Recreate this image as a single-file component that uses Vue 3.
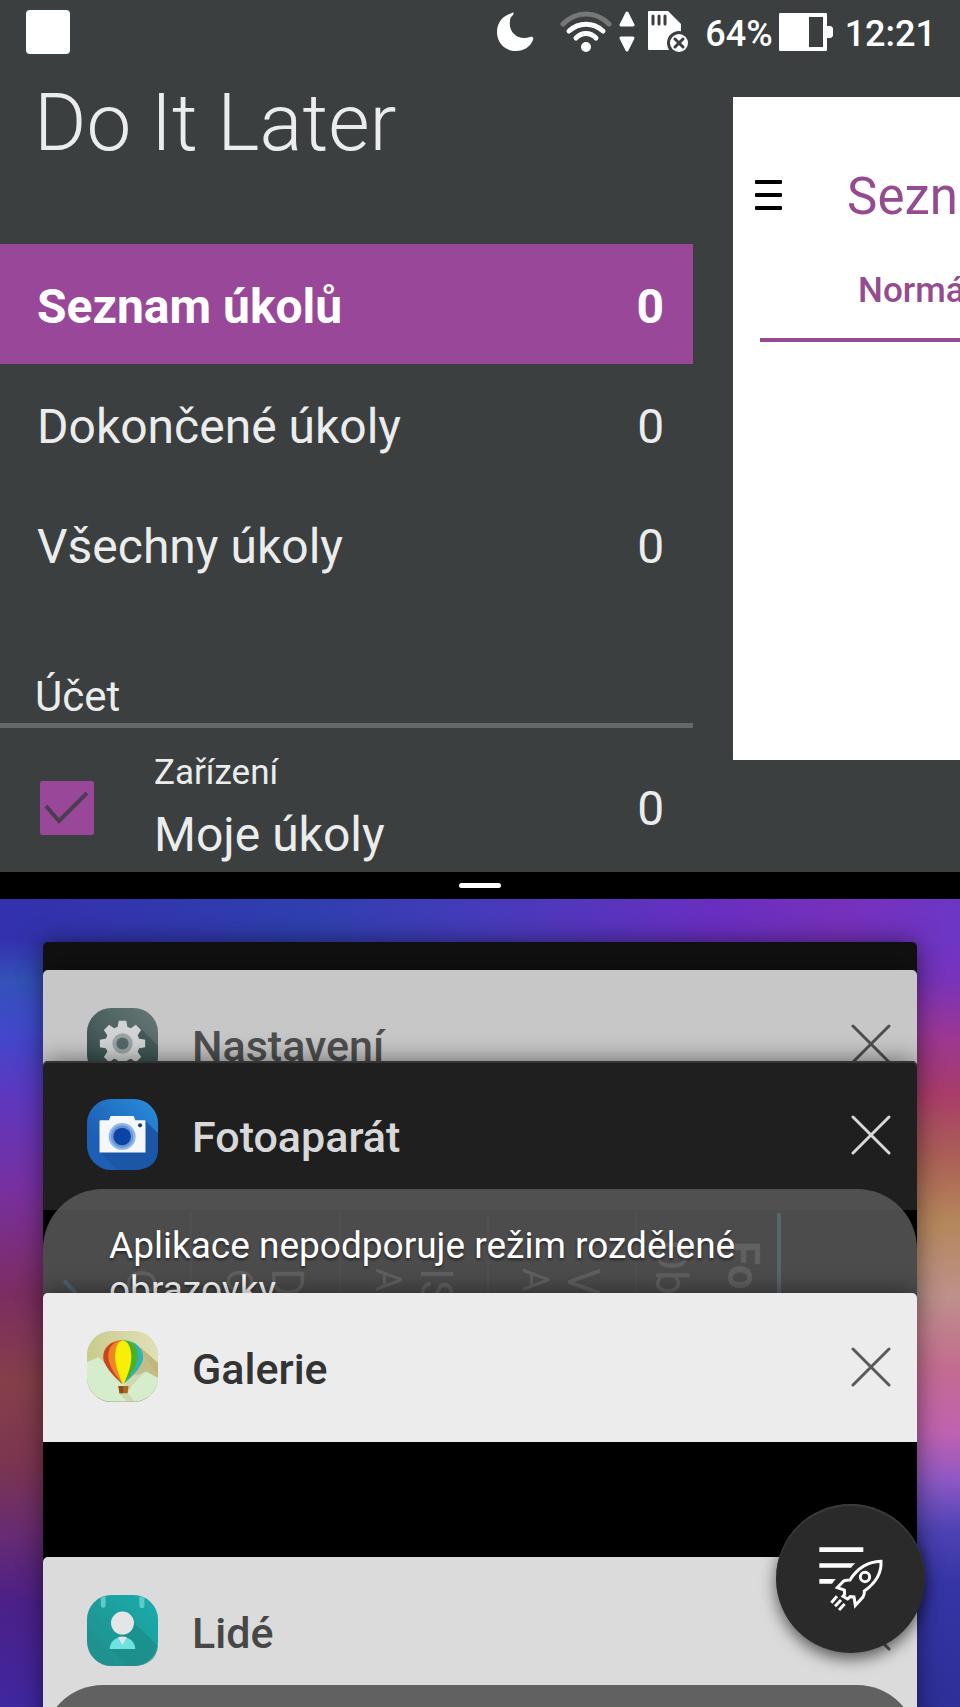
<template>
  <div class="screen">
    <section class="app-pane">
      <header class="status-bar">
        <span class="notice"></span>
        <div class="status-icons">
          <svg class="moon" width="38" height="40" viewBox="0 0 38 40">
            <path
              d="M15 1C4 4 0 12 0 20c0 11 8 19 19 19 8 0 14-4 17-11 1-3-1-4-3-3-11 4-22-4-20-16 0-3 1-4 3-6 1-2 1-3-1-2z"
              fill="#fff"
            />
          </svg>
          <svg class="wifi" width="52" height="44" viewBox="0 0 52 44" fill="none" stroke="#fff" stroke-linecap="round">
            <path d="M3 14C16 .500 36 .500 49 14" stroke="#747978" stroke-width="5" />
            <path d="M9 21c10-9 24-9 34 0" stroke-width="5" />
            <path d="M16 28c6-6 14-6 20 0" stroke-width="5" />
            <circle cx="26" cy="37" r="5" fill="#fff" stroke="none" />
          </svg>
          <svg class="traffic" width="18" height="42" viewBox="0 0 18 42" fill="#fff" stroke="#fff" stroke-width="3" stroke-linejoin="round">
            <path d="M9 2l6 12H3zM9 39L3 27h12z" />
          </svg>
          <svg class="sd-card" width="42" height="42" viewBox="0 0 42 42">
            <path d="M2 0h19l13 13v26H2a1 1 0 0 1-1-1V1a1 1 0 0 1 1-1z" fill="#fff" />
            <path d="M6 5v8M12 5v8M18 5v8" stroke="#3b3f40" stroke-width="3" stroke-linecap="round" />
            <circle cx="32" cy="32" r="12" fill="#3b3f40" />
            <circle cx="32" cy="32" r="9" fill="#fff" />
            <path d="M28 28l8 8M36 28l-8 8" stroke="#3b3f40" stroke-width="3" stroke-linecap="round" />
          </svg>
          <span class="percent">64%</span>
          <svg class="battery" width="54" height="38" viewBox="0 0 54 38">
            <path d="M1 0h46a1 1 0 0 1 1 1v12h4l2 2v8l-2 2h-4v12a1 1 0 0 1-1 1H1a1 1 0 0 1-1-1V1a1 1 0 0 1 1-1z" fill="#fff" />
            <path d="M30 4h14v30H30z" fill="#3b3f40" />
          </svg>
          <time>12:21</time>
        </div>
      </header>

      <div class="app-body">
        <aside class="drawer">
          <h1>Do It Later</h1>
          <nav>
            <a v-for="item in lists" :key="item.name" href="#" :class="{ active: item.active }">
              <span>{{ item.name }}</span>
              <span>{{ item.count }}</span>
            </a>
          </nav>
          <h2>Účet</h2>
          <div class="account">
            <span class="check">
              <input id="account-device" v-model="accountOn" type="checkbox" />
              <svg v-if="accountOn" width="54" height="54" viewBox="0 0 54 54">
                <path d="M6 25l13 15 28-28" fill="none" stroke="#4b3c50" stroke-width="4" />
              </svg>
            </span>
            <label for="account-device">
              <small>Zařízení</small>
              <span>Moje úkoly</span>
            </label>
            <span>0</span>
          </div>
        </aside>

        <main class="content">
          <div class="toolbar">
            <button type="button" class="menu" aria-label="Menu"><i></i><i></i><i></i></button>
            <span>Sezn</span>
          </div>
          <div class="tab">Normá</div>
        </main>
      </div>
    </section>

    <div class="divider"><span></span></div>

    <section class="recents">
      <article v-for="app in apps" :key="app.id" class="card" :class="app.id">
        <header v-if="app.title">
          <!-- settings -->
          <svg v-if="app.id === 'settings'" class="app-icon" viewBox="0 0 210 210">
            <defs>
              <linearGradient id="g-settings" x1="0" y1="1" x2="1" y2="0">
                <stop offset="0" stop-color="#2f4848" />
                <stop offset="1" stop-color="#687977" />
              </linearGradient>
            </defs>
            <rect width="210" height="210" rx="72" fill="url(#g-settings)" />
            <path d="M150 52l60 60v60l-60 38H100L60 160z" fill="#35504f" opacity="0.6" />
            <circle cx="105" cy="105" r="51" fill="#d2d4d4" />
            <path
              v-for="n in 8"
              :key="n"
              d="M94 38h22l4 20H90z"
              fill="#d2d4d4"
              :transform="`rotate(${n * 45} 105 105)`"
            />
            <circle cx="105" cy="105" r="30" fill="#9aa5a5" />
            <circle cx="105" cy="105" r="18" fill="#566968" />
          </svg>
          <!-- camera -->
          <svg v-else-if="app.id === 'camera'" class="app-icon" viewBox="0 0 210 210">
            <defs>
              <linearGradient id="g-camera" x1="0" y1="1" x2="1" y2="0">
                <stop offset="0.3" stop-color="#1d5fb4" />
                <stop offset="1" stop-color="#2a8edd" />
              </linearGradient>
            </defs>
            <rect width="210" height="210" rx="72" fill="url(#g-camera)" />
            <path d="M173 64l37 37v50c0 40-30 59-72 59H90l-50-52z" fill="#1b57a6" />
            <path d="M37 66q0-3 3-3h25l5-13h68l5 13h27q3 0 3 3v92H37z" fill="#f5f7fa" />
            <circle cx="104" cy="111" r="40" fill="#8db8ef" />
            <circle cx="104" cy="111" r="33" fill="#6a94d4" />
            <circle cx="104" cy="111" r="26" fill="#0c44a4" />
            <circle cx="157" cy="78" r="6" fill="#1c3f7c" />
          </svg>
          <!-- gallery -->
          <svg v-else-if="app.id === 'gallery'" class="app-icon" viewBox="0 0 210 210">
            <defs>
              <clipPath id="c-gallery"><rect width="210" height="208" rx="72" /></clipPath>
              <linearGradient id="g-gallery" x1="0" y1="0" x2="1" y2="0">
                <stop offset="0" stop-color="#c9cb8c" />
                <stop offset="1" stop-color="#e2dfba" />
              </linearGradient>
            </defs>
            <rect y="2" width="210" height="208" rx="72" fill="#a9af98" />
            <g clip-path="url(#c-gallery)">
              <path d="M0 0h210v210H0z" fill="url(#g-gallery)" />
              <path d="M160 50l50 44v44l-80-10z" fill="#c2b67c" />
              <path d="M0 92l35-14 60 62 55-10 25-10 35 18v72H0z" fill="#d6edcd" />
              <path d="M166 70l44 60v10l-36-22-40 42-14 24 24 26h-24L95 184z" fill="#c8c493" opacity="0.5" />
            </g>
            <path d="M106 28C70 26 46 50 48 80c2 22 28 52 56 77z" fill="#c8461d" />
            <path d="M106 28C80 28 62 46 63 78c2 24 20 54 43 79z" fill="#f08426" />
            <path d="M106 28c36-2 61 22 60 52-2 22-28 52-58 77z" fill="#2fb2b4" />
            <path d="M106 28c28 0 45 18 44 50-2 24-20 54-44 79z" fill="#4cb026" />
            <path d="M106 28C90 30 83 52 83 78c1 28 12 56 24 82 12-26 24-54 24-82 0-26-8-48-25-50z" fill="#f8ee08" />
            <path d="M93 163h30l-3 21H96z" fill="#b0651f" />
            <path d="M93 163h14v21H96z" fill="#8d4c17" />
          </svg>
          <!-- contacts -->
          <svg v-else class="app-icon" viewBox="0 0 210 210">
            <defs>
              <linearGradient id="g-people" x1="0" y1="1" x2="1" y2="0">
                <stop offset="0.2" stop-color="#1f9290" />
                <stop offset="1" stop-color="#18aeae" />
              </linearGradient>
            </defs>
            <rect width="210" height="210" rx="72" fill="url(#g-people)" />
            <path d="M139 83l71 68c-4 38-30 59-72 59h-20l-50-50z" fill="#1b8b88" opacity="0.7" />
            <path d="M41 8l14-4v27a7 7 0 0 1-14 0zM155 4l15 4v23a7 7 0 0 1-15 0z" fill="#5fcbc8" />
            <circle cx="105" cy="83" r="34" fill="#e4e6e6" />
            <path d="M67 160c2-48 74-48 76 0z" fill="#6fe1de" />
            <path d="M92 125q13-5 26 0l-13 22z" fill="#e4e6e6" />
          </svg>

          <h3>{{ app.title }}</h3>
          <button type="button" class="close" :aria-label="`Zavřít ${app.title}`">
            <svg width="40" height="40" viewBox="0 0 40 40">
              <path d="M2 2l36 36M38 2L2 38" fill="none" stroke="currentColor" stroke-width="3" stroke-linecap="round" />
            </svg>
          </button>
        </header>

        <div v-if="app.note !== undefined" class="toast">
          <!-- sideways camera mode list showing through the message -->
          <svg v-if="app.id === 'camera'" class="modes" viewBox="0 0 874 110" aria-hidden="true">
            <path d="M148 24v86M297 24v86M445 24v86M593 24v86" stroke="#505050" stroke-width="2" />
            <path d="M736 24v86" stroke="#55666c" stroke-width="4" />
            <path d="M21 92l12 12" stroke="#4d6372" stroke-width="4" />
            <g font-size="44">
              <text transform="translate(84 80) rotate(90)" font-size="40">C</text>
              <text transform="translate(184 80) rotate(90)" font-size="36">C</text>
              <text transform="translate(229 79) rotate(90)">D</text>
              <text transform="translate(333 79) rotate(90)" font-size="36">A</text>
              <text transform="translate(378 79) rotate(90)">IS</text>
              <text transform="translate(480 79) rotate(90)" font-size="36">A</text>
              <text transform="translate(525 79) rotate(90)">V</text>
              <text transform="translate(613 51) rotate(90)">Ob</text>
              <text transform="translate(685 52) rotate(90)" font-weight="700">Fo</text>
            </g>
          </svg>
          <p v-if="app.note">{{ app.note }}</p>
        </div>
      </article>

      <button type="button" class="boost" aria-label="Vyčistit">
        <svg width="66" height="66" viewBox="353 317 198 198" fill="none" stroke="#fff">
          <path d="M357 321h132v14H357zM357 369h108q-8 6-13 13h-95zM357 416h49l-11 14h-38z" fill="#fff" stroke="none" />
          <path
            d="M542 363C500 364 470 386 449 419q-12 0-19 3l-19 20 21 7 1 13-5 6 14 8 8-7 11 1 4 25 23-25q5-8 4-18C526 428 544 400 542 363z"
            stroke-width="9"
          />
          <circle cx="494" cy="410" r="14" stroke-width="9" />
          <path d="M393 487l17-19M404 498l18-19M416 509l17-18" stroke-width="9" />
        </svg>
      </button>
    </section>
  </div>
</template>

<script setup>
import { ref } from 'vue';

const accountOn = ref(true);

const lists = [
  { name: 'Seznam úkolů', count: 0, active: true },
  { name: 'Dokončené úkoly', count: 0 },
  { name: 'Všechny úkoly', count: 0 },
];

const apps = [
  { id: 'blank' },
  { id: 'settings', title: 'Nastavení' },
  { id: 'camera', title: 'Fotoaparát', note: 'Aplikace nepodporuje režim rozdělené obrazovky' },
  { id: 'gallery', title: 'Galerie' },
  { id: 'people', title: 'Lidé', note: '' },
];
</script>

<style>
body {
  margin: 0;
  background: #000;
}
</style>

<style scoped>
.screen {
  display: flex;
  flex-direction: column;
  height: 100vh;
  overflow: hidden;
  font-family: Roboto, 'Noto Sans', sans-serif;
}

h1,
h2,
h3,
p {
  margin: 0;
  font-weight: 400;
}

button {
  padding: 0;
  border: 0;
  background: none;
}

svg {
  display: block;
  flex: none;
}

/* upper app */
.app-pane {
  flex: none;
  background: #3b3f40;
  color: #ebeded;
}

.status-bar {
  display: flex;
  align-items: center;
  justify-content: space-between;
  height: 64px;
  padding: 0 24px 0 26px;
  color: #fff;
  font-size: 36px;
  font-weight: 500;
}

.notice {
  width: 44px;
  height: 44px;
  border-radius: 4px;
  background: #fff;
}

.status-icons {
  display: flex;
  align-items: center;
}

.status-icons span,
.status-icons time {
  padding-top: 3px;
}

.wifi {
  margin-left: 25px;
}

.traffic {
  margin-left: 6px;
}

.sd-card {
  margin-left: 11px;
}

.percent {
  margin-left: 16px;
}

.battery {
  margin: 0 12px 0 6px;
}

.app-body {
  display: flex;
  align-items: flex-start;
}

.drawer {
  flex: none;
  width: 72.2%;
}

h1 {
  padding: 19px 34px 81px;
  font-size: 80px;
  font-weight: 300;
  line-height: 80px;
}

nav {
  padding-bottom: 66px;
}

nav a {
  display: flex;
  align-items: center;
  justify-content: space-between;
  box-sizing: border-box;
  height: 120px;
  padding: 4px 29px 0 37px;
  color: #ebeded;
  font-size: 48px;
  text-decoration: none;
}

nav a.active {
  background: #994899;
  color: #fff;
  font-weight: 700;
}

h2 {
  padding-left: 35px;
  border-bottom: 5px solid #636968;
  font-size: 42px;
  line-height: 53px;
}

.account {
  display: flex;
  align-items: center;
  box-sizing: border-box;
  height: 144px;
  padding: 16px 29px 0 40px;
  font-size: 48px;
}

.check {
  display: grid;
}

.check > * {
  grid-area: 1 / 1;
}

.check svg {
  pointer-events: none;
}

.check input {
  width: 54px;
  height: 54px;
  margin: 0;
  border-radius: 3px;
  background: #994899;
  appearance: none;
}

.account label {
  display: flex;
  flex: 1;
  flex-direction: column;
  gap: 10px;
  margin-left: 60px;
  padding-top: 4px;
  line-height: 64px;
}

.account small {
  font-size: 35px;
  line-height: 40px;
}

.content {
  flex: 1;
  min-width: 0;
  height: 663px;
  margin: 33px 0 0 40px;
  overflow: hidden;
  background: #fff;
  color: #944b8f;
}

.toolbar {
  display: flex;
  align-items: center;
  gap: 65px;
  padding: 68px 0 0 22px;
  font-size: 51px;
  line-height: 64px;
}

.menu {
  display: flex;
  flex-direction: column;
  gap: 9px;
  padding-bottom: 4px;
}

.menu i {
  width: 27px;
  height: 4px;
  border-radius: 1px;
  background: #000;
}

.tab {
  margin-left: 27px;
  padding: 42px 0 27px 98px;
  border-bottom: 4px solid #944b8f;
  font-size: 35px;
  font-weight: 500;
  line-height: 40px;
}

.divider {
  display: flex;
  flex: none;
  align-items: center;
  justify-content: center;
  height: 27px;
  background: #000;
}

.divider span {
  width: 42px;
  height: 5px;
  border-radius: 3px;
  background: #fff;
}

/* recent apps */
.recents {
  position: relative;
  flex: 1;
  min-height: 0;
  padding: 43px 43px 0;
  overflow: hidden;
  background:
    linear-gradient(90deg, #3331ad, #3333ae 8%, #2f3fae 32%, #453bbb 50%, #6a2ec0 75%, #7631bb 88%, #7133c2 94%, #6c37c5) top / 100% 43px no-repeat,
    linear-gradient(#3331ad 5%, #3352b8 10%, #4247cc 17%, #5c38c0 24%, #78309f 36%, #7c2d60 49%, #853f4a 60%, #7b3550 70%, #662b74 79%, #4c2088 87%, #3f27a0) left / 50% 100% no-repeat,
    linear-gradient(#6e35c4 5%, #7833bb 10%, #9c3793 17%, #a83c6a 24%, #ab6055 32%, #b5875b 40%, #bd918a 49%, #c36c90 58%, #c062b0 66%, #8c58c4 72%, #4f43b4 78%, #3535a6 85%, #2e2f98) right / 50% 100% no-repeat;
}

.card {
  position: relative;
  box-sizing: border-box;
  margin-bottom: -6px;
  overflow: hidden;
  border-radius: 5px 5px 0 0;
  box-shadow: 0 0 24px rgba(0, 0, 0, 0.5);
}

.card header {
  display: flex;
  align-items: center;
  box-sizing: border-box;
  height: 149px;
  padding: 0 26px 2px 44px;
}

.app-icon {
  width: 71px;
  height: 71px;
}

h3 {
  flex: 1;
  padding: 5px 0 0 34px;
  font-size: 43px;
  font-weight: 500;
}

.close {
  color: inherit;
}

.blank {
  height: 34px;
  background: #111;
}

.settings {
  height: 97px;
  background: #c7c7c7;
  color: #4e4e4e;
}

.camera {
  height: 238px;
  background: linear-gradient(#1f1f1f 149px, #000 149px);
  color: #d8d8d8;
  box-shadow:
    inset 0 2px #343434,
    0 0 24px rgba(0, 0, 0, 0.5);
}

.gallery {
  height: 270px;
  background: linear-gradient(#ececec 149px, #000 149px);
  color: #333;
}

.people {
  height: 180px;
  background: #dbdbdb;
  color: #474747;
}

.gallery .close,
.people .close {
  color: #5a5a5a;
}

.toast {
  position: relative;
  height: 110px;
  margin-top: -21px;
  border-radius: 60px 60px 0 0;
  background: linear-gradient(#505050 21px, #4c4c4c 21px);
}

.people .toast {
  background: #616161;
}

.modes {
  position: absolute;
  top: 0;
  left: 0;
  width: 100%;
  fill: #606060;
}

.toast p {
  position: relative;
  padding: 35px 66px 0;
  color: #fff;
  font-size: 37px;
  line-height: 44px;
  text-shadow: 0 2px 3px rgba(0, 0, 0, 0.5);
}

.boost {
  position: absolute;
  right: 35px;
  bottom: 54px;
  display: grid;
  place-items: center;
  width: 149px;
  height: 149px;
  border-radius: 50%;
  background: #2a2a2a;
  box-shadow:
    inset 0 2px 1px #3c3c3c,
    0 6px 16px rgba(0, 0, 0, 0.6);
}
</style>
